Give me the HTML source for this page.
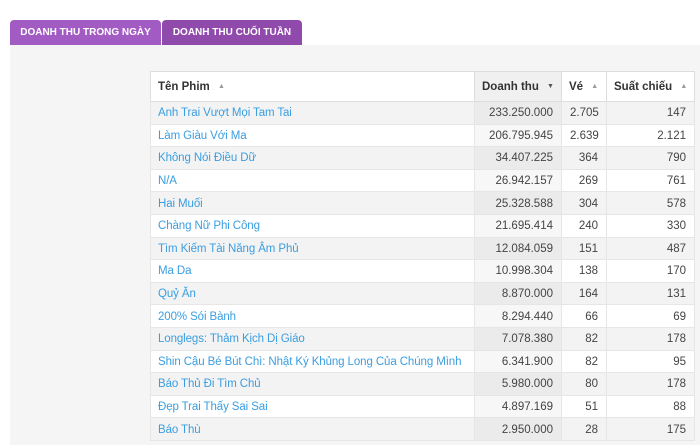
<!DOCTYPE html>
<html><head><meta charset="utf-8"><style>
*{margin:0;padding:0;box-sizing:border-box}
body{width:700px;height:438px;overflow:hidden;background:#fff;font-family:"Liberation Sans",sans-serif;position:relative}
.tab{position:absolute;top:20px;height:25px;color:#fff;font-size:10px;font-weight:bold;line-height:25px;text-align:center;border-radius:4px 4px 0 0}
.t1{left:10px;width:151px;background:#a35bc4}
.t2{left:162px;width:140px;background:#8f4aac}
.panel{position:absolute;left:10px;top:45px;width:690px;height:400px;background:#f5f5f5}
table{position:absolute;left:150px;top:71px;width:544px;border-collapse:collapse;background:#fff;font-size:11.5px;table-layout:fixed}
th{height:30px;text-align:left;padding:0 7px;font-weight:bold;color:#333;border:1px solid #ddd;font-size:11.5px;white-space:nowrap}
th .a{color:#999;font-size:7px;margin-left:5px;vertical-align:middle}
td{height:22.6px;padding:1px 8px 0;border:1px solid #e6e6e6;color:#444;text-align:right;white-space:nowrap;overflow:hidden}
td:first-child{text-align:left;color:#3a9ee0;padding-left:7px;letter-spacing:-0.1px}
tr:nth-child(odd) td{background:#f3f3f3}
tr:nth-child(odd) td.s{background:#ebebeb}
tr:nth-child(even) td.s{background:#f7f7f7}
th.s{background:#f0f0f0}
</style></head><body>
<div class="tab t1">DOANH THU TRONG NGÀY</div>
<div class="tab t2">DOANH THU CUỐI TUẦN</div>
<div class="panel"></div>
<table>
<colgroup><col style="width:324px"><col style="width:87px"><col style="width:45px"><col style="width:88px"></colgroup>
<thead><tr><th>Tên Phim <span class="a">▲</span></th><th class="s">Doanh thu <span class="a" style="color:#555">▼</span></th><th>Vé <span class="a">▲</span></th><th>Suất chiếu <span class="a">▲</span></th></tr></thead>
<tbody>
<tr><td>Anh Trai Vượt Mọi Tam Tai</td><td class="s">233.250.000</td><td>2.705</td><td>147</td></tr>
<tr><td>Làm Giàu Với Ma</td><td class="s">206.795.945</td><td>2.639</td><td>2.121</td></tr>
<tr><td>Không Nói Điều Dữ</td><td class="s">34.407.225</td><td>364</td><td>790</td></tr>
<tr><td>N/A</td><td class="s">26.942.157</td><td>269</td><td>761</td></tr>
<tr><td>Hai Muối</td><td class="s">25.328.588</td><td>304</td><td>578</td></tr>
<tr><td>Chàng Nữ Phi Công</td><td class="s">21.695.414</td><td>240</td><td>330</td></tr>
<tr><td>Tìm Kiếm Tài Năng Âm Phủ</td><td class="s">12.084.059</td><td>151</td><td>487</td></tr>
<tr><td>Ma Da</td><td class="s">10.998.304</td><td>138</td><td>170</td></tr>
<tr><td>Quỷ Ăn</td><td class="s">8.870.000</td><td>164</td><td>131</td></tr>
<tr><td>200% Sói Bành</td><td class="s">8.294.440</td><td>66</td><td>69</td></tr>
<tr><td>Longlegs: Thảm Kịch Dị Giáo</td><td class="s">7.078.380</td><td>82</td><td>178</td></tr>
<tr><td>Shin Cậu Bé Bút Chì: Nhật Ký Khủng Long Của Chúng Mình</td><td class="s">6.341.900</td><td>82</td><td>95</td></tr>
<tr><td>Báo Thủ Đi Tìm Chủ</td><td class="s">5.980.000</td><td>80</td><td>178</td></tr>
<tr><td>Đẹp Trai Thấy Sai Sai</td><td class="s">4.897.169</td><td>51</td><td>88</td></tr>
<tr><td>Báo Thù</td><td class="s">2.950.000</td><td>28</td><td>175</td></tr>
</tbody></table>
</body></html>
